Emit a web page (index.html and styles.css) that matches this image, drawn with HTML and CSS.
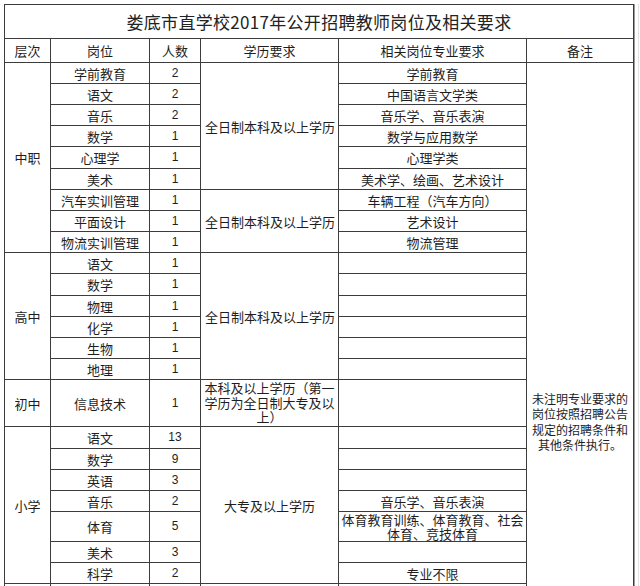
FILE: index.html
```html
<!DOCTYPE html>
<html lang="zh-CN">
<head>
<meta charset="utf-8">
<title>娄底市直学校2017年公开招聘教师岗位及相关要求</title>
<link rel="stylesheet" href="styles.css">
</head>
<body>
<div class="sheet">
  <div class="table">
    <div class="cell title">娄底市直学校2017年公开招聘教师岗位及相关要求</div>

    <div class="cell">层次</div>
    <div class="cell">岗位</div>
    <div class="cell">人数</div>
    <div class="cell">学历要求</div>
    <div class="cell">相关岗位专业要求</div>
    <div class="cell">备注</div>

    <!-- 中职 -->
    <div class="cell span-9">中职</div>
    <div class="cell">学前教育</div>
    <div class="cell num">2</div>
    <div class="cell span-6 left">全日制本科及以上学历</div>
    <div class="cell">学前教育</div>
    <div class="cell remark">未注明专业要求的岗位按照招聘公告规定的招聘条件和其他条件执行。</div>

    <div class="cell">语文</div>
    <div class="cell num">2</div>
    <div class="cell">中国语言文学类</div>

    <div class="cell">音乐</div>
    <div class="cell num">2</div>
    <div class="cell">音乐学、音乐表演</div>

    <div class="cell">数学</div>
    <div class="cell num">1</div>
    <div class="cell">数学与应用数学</div>

    <div class="cell">心理学</div>
    <div class="cell num">1</div>
    <div class="cell">心理学类</div>

    <div class="cell">美术</div>
    <div class="cell num">1</div>
    <div class="cell">美术学、绘画、艺术设计</div>

    <div class="cell">汽车实训管理</div>
    <div class="cell num">1</div>
    <div class="cell span-3 left">全日制本科及以上学历</div>
    <div class="cell">车辆工程（汽车方向）</div>

    <div class="cell">平面设计</div>
    <div class="cell num">1</div>
    <div class="cell">艺术设计</div>

    <div class="cell">物流实训管理</div>
    <div class="cell num">1</div>
    <div class="cell">物流管理</div>

    <!-- 高中 -->
    <div class="cell span-6">高中</div>
    <div class="cell">语文</div>
    <div class="cell num">1</div>
    <div class="cell span-6 left">全日制本科及以上学历</div>
    <div class="cell"></div>

    <div class="cell">数学</div>
    <div class="cell num">1</div>
    <div class="cell"></div>

    <div class="cell">物理</div>
    <div class="cell num">1</div>
    <div class="cell"></div>

    <div class="cell">化学</div>
    <div class="cell num">1</div>
    <div class="cell"></div>

    <div class="cell">生物</div>
    <div class="cell num">1</div>
    <div class="cell"></div>

    <div class="cell">地理</div>
    <div class="cell num">1</div>
    <div class="cell"></div>

    <!-- 初中 -->
    <div class="cell">初中</div>
    <div class="cell">信息技术</div>
    <div class="cell num">1</div>
    <div class="cell wrap">本科及以上学历（第一学历为全日制大专及以上）</div>
    <div class="cell"></div>

    <!-- 小学 -->
    <div class="cell span-7">小学</div>
    <div class="cell">语文</div>
    <div class="cell num">13</div>
    <div class="cell span-7">大专及以上学历</div>
    <div class="cell"></div>

    <div class="cell">数学</div>
    <div class="cell num">9</div>
    <div class="cell"></div>

    <div class="cell">英语</div>
    <div class="cell num">3</div>
    <div class="cell"></div>

    <div class="cell">音乐</div>
    <div class="cell num">2</div>
    <div class="cell">音乐学、音乐表演</div>

    <div class="cell">体育</div>
    <div class="cell num">5</div>
    <div class="cell wrap tight">体育教育训练、体育教育、社会体育、竞技体育</div>

    <div class="cell">美术</div>
    <div class="cell num">3</div>
    <div class="cell"></div>

    <div class="cell">科学</div>
    <div class="cell num">2</div>
    <div class="cell">专业不限</div>

    <!-- continuation below the visible area -->
    <div class="cell"></div>
    <div class="cell"></div>
    <div class="cell"></div>
    <div class="cell"></div>
    <div class="cell"></div>
  </div>
</div>
</body>
</html>
```

FILE: styles.css
```css
html, body {
  margin: 0;
  padding: 0;
  background: #ffffff;
}

body {
  height: 586px;
  overflow: hidden;
  font-family: "Noto Sans CJK SC", "Noto Sans", sans-serif;
  color: #1e1e1e;
}

.sheet {
  padding: 4px 0 0 4px;
}

.table {
  display: inline-grid;
  grid-template-columns: 45px 98px 50px 137px 187px 106px;
  grid-template-rows:
    33px 23px
    20px 20px 20px 20px 21px 20px 20px 20px 20px
    20px 21px 20px 20px 20px 20px
    46px
    21px 20px 20px 20px 29px 20px 20px
    196px;
  gap: 1px;
  padding: 1px;
  background: #3c3c3c;
  box-shadow: 1px 0 0 #9a9a9a, 4px 0 0 #ffffff, 5px 0 0 #e2e2e2;
}

.cell {
  background: #ffffff;
  display: flex;
  align-items: center;
  justify-content: center;
  text-align: center;
  font-size: 13px;
  line-height: 15px;
  white-space: nowrap;
  overflow: visible;
}

.title {
  grid-column: span 6;
  font-size: 17px;
  font-weight: 400;
  color: #222222;
  letter-spacing: 0.3px;
}

.num {
  font-family: "Liberation Sans", "Noto Sans", sans-serif;
  font-size: 12px;
}

.left {
  justify-content: flex-start;
  padding-left: 4px;
}

.wrap {
  white-space: normal;
  padding: 0 3px;
  line-height: 14.5px;
}

.tight {
  padding: 0 1px;
  line-height: 14px;
}

.span-3 { grid-row: span 3; }
.span-6 { grid-row: span 6; }
.span-7 { grid-row: span 7; }
.span-9 { grid-row: span 9; }

.remark {
  grid-row: span 24;
  white-space: normal;
  font-size: 12px;
  line-height: 15.3px;
  padding: 0 3px;
}
```
